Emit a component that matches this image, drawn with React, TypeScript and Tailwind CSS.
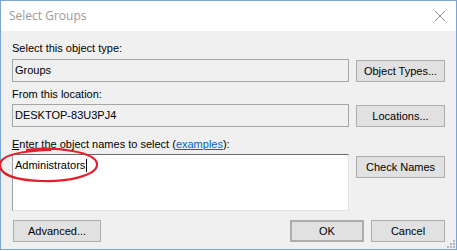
import React from "react";

const font = { fontFamily: '"Liberation Sans", Arial, sans-serif' };

function Btn({ label, className = "" }: { label: string; className?: string }) {
  return (
    <button
      type="button"
      className={`flex h-[22px] items-center justify-center border border-[#adadad] bg-[#e1e1e1] text-[11px] leading-none text-black ${className}`}
    >
      {label}
    </button>
  );
}

function ReadOnlyBox({ value }: { value: string }) {
  return (
    <div className="flex h-[23px] w-[337px] items-center border border-[#a6a6a6] bg-[#f0f0f0] pl-[2px] text-[11px] text-black">
      {value}
    </div>
  );
}

export default function App() {
  return (
    <div className="relative h-[251px] w-[457px] overflow-hidden bg-white" style={font}>
      <div className="flex h-[250px] w-[457px] flex-col border border-[#7ba6d3]">
        {/* Title bar */}
        <div className="flex h-[30px] shrink-0 items-center justify-between bg-white pl-[8px] pr-[9px]">
          <span
            className="text-[12px] text-[#9a9a9a]"
            style={{ fontFamily: '"Open Sans", "Noto Sans", sans-serif' }}
          >
            Select Groups
          </span>
          <svg width="12" height="12" viewBox="0 0 12 12" className="mr-[1px]">
            <path d="M1 1 L11 11 M11 1 L1 11" stroke="#8a8a8a" strokeWidth="1" />
          </svg>
        </div>

        {/* Body */}
        <div className="relative flex flex-1 flex-col bg-[#f0f0f0] pl-[11px] pr-[11px] pt-[11px]">
          <div className="h-[13px] text-[11px] leading-[13px] text-black">Select this object type:</div>
          <div className="mt-[4px] flex items-start gap-[7px]">
            <ReadOnlyBox value="Groups" />
            <Btn label="Object Types..." className="mt-[1px] w-[89px]" />
          </div>

          <div className="mt-[6px] h-[13px] text-[11px] leading-[13px] text-black">From this location:</div>
          <div className="mt-[3px] flex items-start gap-[7px]">
            <ReadOnlyBox value="DESKTOP-83U3PJ4" />
            <Btn label="Locations..." className="mt-[1px] w-[89px]" />
          </div>

          <div className="mt-[11px] h-[13px] text-[11px] leading-[13px] text-black">
            <span className="underline decoration-1 underline-offset-1">E</span>nter the object names to select (
            <span className="text-[#0066cc] underline decoration-1 underline-offset-1">examples</span>):
          </div>
          <div className="mt-[3px] flex items-start gap-[7px]">
            <div className="flex h-[57px] w-[337px] items-start border border-b-[#e3e3e3] border-l-[#a0a0a0] border-r-[#e3e3e3] border-t-[#6b6b6b] bg-white pl-[2px] pt-[4px] text-[11px] leading-[13px] text-black">
              Administrators
              <span className="ml-[1px] inline-block h-[13px] w-px bg-black" />
            </div>
            <Btn label="Check Names" className="mt-[2px] w-[89px]" />
          </div>

          <div className="mt-[9px] flex items-center">
            <Btn label="Advanced..." className="ml-[1px] w-[88px]" />
            <div className="flex-1" />
            <Btn label="OK" className="w-[74px] border-2 border-[#0078d7]" />
            <Btn label="Cancel" className="ml-[7px] w-[74px]" />
          </div>

          {/* resize grip */}
          <svg width="8" height="8" viewBox="0 0 8 8" className="absolute bottom-[1px] right-[1px]">
            <rect x="6" y="0" width="2" height="2" fill="#b8b8b8" />
            <rect x="3" y="3" width="2" height="2" fill="#b8b8b8" />
            <rect x="6" y="3" width="2" height="2" fill="#b8b8b8" />
            <rect x="0" y="6" width="2" height="2" fill="#b8b8b8" />
            <rect x="3" y="6" width="2" height="2" fill="#b8b8b8" />
            <rect x="6" y="6" width="2" height="2" fill="#b8b8b8" />
          </svg>
        </div>
      </div>

      {/* red annotation ellipse */}
      <svg width="110" height="40" viewBox="0 0 110 40" className="pointer-events-none absolute left-[-4px] top-[146px]">
        <path
          d="M30 4 C60 0 100 6 101 18 C102 30 70 36 45 35 C18 34 4 28 4 19 C4 10 20 5 55 4"
          fill="none"
          stroke="#e2202b"
          strokeWidth="2.2"
        />
      </svg>
    </div>
  );
}
